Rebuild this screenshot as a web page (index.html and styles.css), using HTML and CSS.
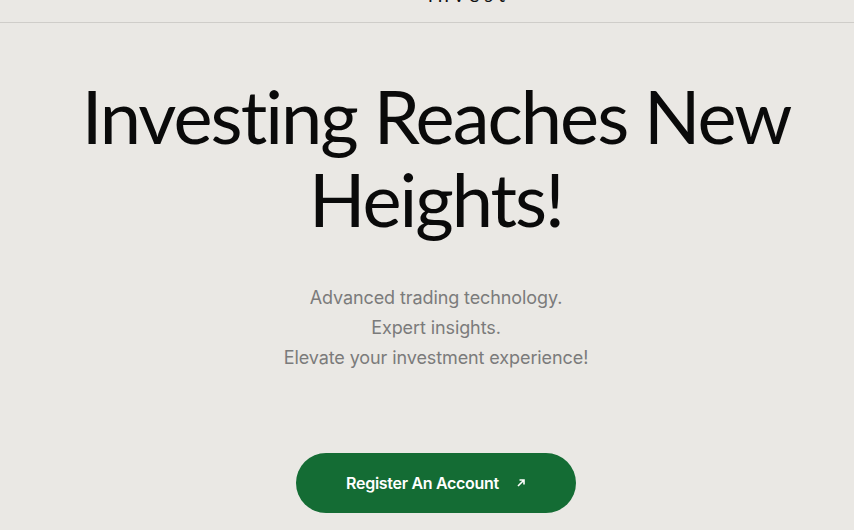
FILE: index.html
```html
<!DOCTYPE html>
<html>
<head>
<meta charset="utf-8">
<link rel="stylesheet" href="styles.css">
</head>
<body>
<header class="topbar">
  <span class="brand">invest</span>
</header>
<main class="hero">
  <h1 class="title">Investing Reaches New<br>Heights!</h1>
  <p class="lead">Advanced trading technology.<br>Expert insights.<br>Elevate your investment experience!</p>
  <a class="cta" href="#">Register An Account <span class="arrow"><svg width="10" height="10" viewBox="0 0 10 10"><path d="M2 8L8 2M3.5 2H8V6.5" fill="none" stroke="#fff" stroke-width="1.6"/></svg></span></a>
</main>
</body>
</html>
```
FILE: styles.css
```css
html, body {
  margin: 0;
  padding: 0;
  background: #eae8e4;
  overflow: hidden;
}
body {
  font-family: "Inter", "Liberation Sans", sans-serif;
  height: 530px;
}
.topbar {
  height: 22px;
  border-bottom: 1px solid #cfcdc9;
  display: flex;
  justify-content: center;
  overflow: hidden;
}
.brand {
  display: block;
  margin-top: -16px;
  margin-left: 84px;
  font-family: "Lato", sans-serif;
  font-size: 20px;
  line-height: 20px;
  letter-spacing: 5px;
  color: #111;
}
.hero {
  display: flex;
  flex-direction: column;
  align-items: center;
  text-align: center;
  padding-left: 18px;
}
.title {
  margin: 51px 0 0;
  font-family: "Lato", sans-serif;
  font-weight: 400;
  font-size: 74px;
  line-height: 83px;
  letter-spacing: -2px;
  color: #0a0a0a;
}
.lead {
  margin: 43px 0 0;
  font-size: 18px;
  line-height: 30px;
  color: #7b7b7b;
  letter-spacing: -0.1px;
}
.cta {
  margin-top: 80px;
  width: 280px;
  height: 60px;
  border-radius: 30px;
  background: #146c34;
  color: #fff;
  text-decoration: none;
  display: flex;
  align-items: center;
  justify-content: center;
  gap: 17px;
  font-size: 16px;
  font-weight: 600;
  letter-spacing: -0.3px;
}
.arrow {
  display: flex;
}
```
